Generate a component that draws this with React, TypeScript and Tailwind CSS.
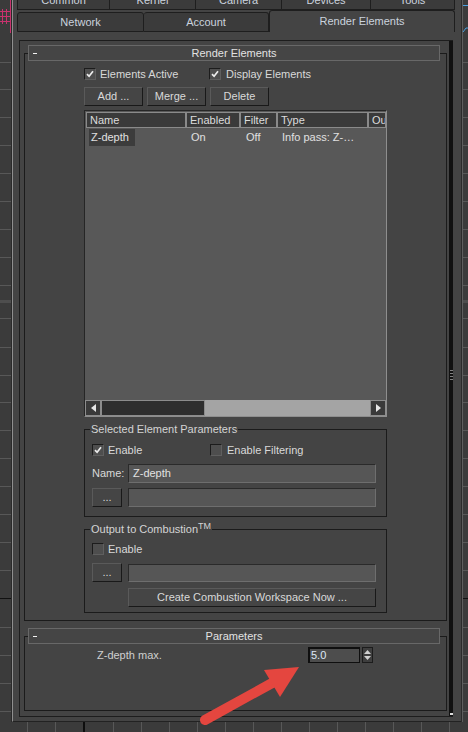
import React from 'react'

type Kids = { children?: React.ReactNode; className?: string }

// grid lines of the viewport showing around the dialog
const hLines = [62, 89, 117, 145, 173, 201, 229, 257, 285, 318, 347, 375, 402, 430, 458, 486, 514, 542, 570, 627, 655, 683, 711]
const vLines = [27, 55, 113, 141, 169, 197, 225, 253, 281, 309, 337, 365, 393, 421, 449]

const LeftViewport = () => (
  <svg width="12" height="722" className="block shrink-0">
    <rect width="12" height="722" fill="#3b3b3b" />
    {hLines.map((y) => (
      <rect key={y} x="0" y={y} width="11" height="1" fill="#585858" />
    ))}
    <rect x="0" y="300" width="11" height="3" fill="#4e4e4e" />
    <rect x="0" y="598" width="11" height="1" fill="#111" />
    {/* magenta helper grid in the corner */}
    <rect x="10" y="0" width="1" height="33" fill="#c8326e" />
    <rect x="0" y="11" width="10" height="1" fill="#c8326e" />
    <rect x="0" y="16" width="10" height="1" fill="#c8326e" />
    <rect x="0" y="21" width="10" height="1" fill="#c8326e" />
    <rect x="2" y="9" width="1" height="15" fill="#c8326e" />
    <rect x="6" y="9" width="1" height="15" fill="#c8326e" />
    <rect x="11" y="0" width="1" height="722" fill="#2a2a2a" />
  </svg>
)

const RightViewport = () => (
  <svg width="7" height="722" className="block shrink-0">
    <rect width="7" height="722" fill="#3b3b3b" />
    <rect x="0" y="0" width="1" height="722" fill="#2b2b2b" />
    <rect x="1" y="0" width="1" height="722" fill="#5e5e5e" />
    {hLines.map((y) => (
      <rect key={y} x="2" y={y} width="5" height="1" fill="#585858" />
    ))}
    <rect x="2" y="300" width="5" height="3" fill="#4e4e4e" />
    <rect x="2" y="598" width="5" height="1" fill="#111" />
    <rect x="2" y="5" width="5" height="1" fill="#4b9fe0" />
    <path d="M2 32 L5 28 L7 28" fill="none" stroke="#4b9fe0" strokeWidth="1" />
  </svg>
)

const BottomViewport = () => (
  <svg width="468" height="10" className="block shrink-0">
    <rect width="468" height="10" fill="#3b3b3b" />
    {vLines.map((x) => (
      <rect key={x} x={x} y="0" width="1" height="10" fill="#585858" />
    ))}
    <rect x="83" y="0" width="2" height="10" fill="#0e0e0e" />
  </svg>
)

const CheckBox = ({ checked = false }: { checked?: boolean }) => (
  <span className="flex h-[12px] w-[12px] shrink-0 items-center justify-center border border-t-[#1c1c1c] border-l-[#1c1c1c] border-b-[#5f5f5f] border-r-[#5f5f5f] bg-[#4e4e4e]">
    {checked && (
      <svg width="8" height="8" viewBox="0 0 8 8">
        <path d="M1 4.1 L3.1 6.3 L7 1.3" fill="none" stroke="#ededed" strokeWidth="1.7" />
      </svg>
    )}
  </span>
)

const Button = ({ children, className = '' }: Kids) => (
  <div
    className={`flex shrink-0 items-center justify-center border border-t-[#5a5a5a] border-l-[#5a5a5a] border-b-[#191919] border-r-[#191919] bg-[#454545] text-[#d9d9d9] ${className}`}
  >
    {children}
  </div>
)

const Field = ({ children, className = '' }: Kids) => (
  <div
    className={`flex shrink-0 items-center border border-t-[#2a2a2a] border-l-[#2a2a2a] border-b-[#6e6e6e] border-r-[#6e6e6e] bg-[#565656] px-[4px] ${className}`}
  >
    {children}
  </div>
)

const Rollout = ({ title, children, className = '' }: Kids & { title: string }) => (
  <div className={`relative w-[423px] ${className}`}>
    {/* body frame, the header sits on top of its upper edge */}
    <div className="pointer-events-none absolute inset-x-0 top-[8px] bottom-0 border border-[#1b1b1b]" />
    <div className="relative ml-[4px] mr-[7px] flex h-[16px] items-center justify-center border border-[#686868] bg-[#454545] text-[#e2e2e2]">
      <span className="absolute left-[4px] top-[7px] h-[1px] w-[4px] bg-[#f2f2f2]" />
      {title}
    </div>
    <div className="relative">{children}</div>
  </div>
)

const Group = ({ title, children, className = '' }: Kids & { title: React.ReactNode }) => (
  <fieldset className={`border border-[#1b1b1b] ${className}`}>
    <legend className="ml-[5px] px-[1px] leading-[13px] text-[#d4d4d4]">{title}</legend>
    {children}
  </fieldset>
)

const HeadCell = ({ children, className = '' }: Kids) => (
  <div className={`flex h-[16px] shrink-0 items-center overflow-hidden border border-[#8a8a8a] bg-[#3a3a3a] pl-[3px] ${className}`}>
    {children}
  </div>
)

const Arrow = ({ dir }: { dir: 'left' | 'right' }) => (
  <div className="flex h-[16px] w-[16px] shrink-0 items-center justify-center border border-[#8d8d8d] bg-[#3a3a3a]">
    <svg width="5" height="8" viewBox="0 0 5 8">
      {dir === 'left' ? <path d="M5 0 L0 4 L5 8 Z" fill="#e6e6e6" /> : <path d="M0 0 L5 4 L0 8 Z" fill="#e6e6e6" />}
    </svg>
  </div>
)

const ElementList = () => (
  <div className="mt-[4px] flex h-[307px] w-[303px] flex-col border border-t-[#262626] border-l-[#262626] border-b-[#8e8e8e] border-r-[#8e8e8e] bg-[#585858]">
    <div className="flex pl-[1px] pt-[1px] text-[#dcdcdc]">
      <HeadCell className="w-[100px]">Name</HeadCell>
      <HeadCell className="w-[54px]">Enabled</HeadCell>
      <HeadCell className="w-[37px]">Filter</HeadCell>
      <HeadCell className="w-[91px]">Type</HeadCell>
      <HeadCell className="min-w-0 flex-1">Output</HeadCell>
    </div>
    <div className="mt-[1px] flex h-[17px] items-center pl-[1px] text-[#e0e0e0]">
      <div className="flex w-[100px] pl-[3px]">
        <span className="flex h-[17px] w-[46px] items-center bg-[#3c3c3c] pl-[2px]">Z-depth</span>
      </div>
      <span className="w-[54px] pl-[5px]">On</span>
      <span className="w-[37px] pl-[6px]">Off</span>
      <span className="w-[91px] pl-[5px]">Info pass: Z-…</span>
    </div>
    <div className="flex-1" />
    <div className="flex h-[16px]">
      <Arrow dir="left" />
      <div className="h-[16px] w-[104px] shrink-0 border border-[#8c8c8c] bg-[#2e2e2e]" />
      <div className="flex-1 bg-[#a4a4a4]" />
      <Arrow dir="right" />
    </div>
  </div>
)

const Tab = ({ children, className = '' }: Kids) => (
  <div className={`flex shrink-0 items-center justify-center text-[#cbd3de] ${className}`}>{children}</div>
)

const Tabs = () => (
  <div className="shrink-0">
    <div className="h-[10px] overflow-hidden pl-[4px]">
      <div className="-mt-[10px] flex h-[20px]">
        <Tab className="w-[93px] border border-[#1e1e1e] bg-[#3b3b3b]">Common</Tab>
        <Tab className="w-[86px] border border-l-0 border-[#1e1e1e] bg-[#3b3b3b]">Kernel</Tab>
        <Tab className="w-[86px] border border-l-0 border-[#1e1e1e] bg-[#3b3b3b]">Camera</Tab>
        <Tab className="w-[89px] border border-l-0 border-[#1e1e1e] bg-[#3b3b3b]">Devices</Tab>
        <Tab className="w-[84px] border border-l-0 border-[#1e1e1e] bg-[#3b3b3b]">Tools</Tab>
      </div>
    </div>
    <div className="flex h-[22px] items-end pl-[4px]">
      <Tab className="h-[20px] w-[127px] rounded-t-[3px] border border-[#1e1e1e] bg-[#3b3b3b]">Network</Tab>
      <Tab className="h-[20px] w-[125px] rounded-t-[3px] border border-l-0 border-[#1e1e1e] bg-[#3b3b3b]">Account</Tab>
      <Tab className="h-[22px] w-[186px] rounded-t-[3px] border border-b-0 border-[#1e1e1e] bg-[#444444]">Render Elements</Tab>
    </div>
  </div>
)

export default function App() {
  return (
    <div className="relative flex h-[732px] w-[468px] flex-col overflow-hidden bg-[#3b3b3b] font-['Liberation_Sans',Arial,sans-serif] text-[11px] leading-[13px] text-[#d9d9d9]">
      <div className="flex h-[722px]">
        <LeftViewport />
        <div className="flex w-[449px] shrink-0 flex-col border-b border-l border-b-[#222222] border-l-[#8f8f8f] bg-[#444444]">
          <Tabs />
          <div className="flex min-h-0 flex-1 flex-col pb-[4px] pl-[6px] pr-[8px] pt-[8px]">
            <div className="flex min-h-0 flex-1 border-b border-l border-t border-[#1d1d1d]">
              <div className="flex-1 pl-[4px] pt-[4px]">
                <Rollout title="Render Elements" className="h-[576px]">
                  <div className="ml-[60px] w-[303px] pt-[7px]">
                    <div className="flex h-[12px] items-center">
                      <CheckBox checked />
                      <span className="ml-[4px] w-[109px]">Elements Active</span>
                      <CheckBox checked />
                      <span className="ml-[5px]">Display Elements</span>
                    </div>
                    <div className="mt-[7px] flex h-[19px] gap-[4px]">
                      <Button className="h-[19px] w-[59px]">Add ...</Button>
                      <Button className="h-[19px] w-[59px]">Merge ...</Button>
                      <Button className="h-[19px] w-[59px]">Delete</Button>
                    </div>
                    <ElementList />
                    <Group title="Selected Element Parameters" className="mt-[6px] h-[94px]">
                      <div className="pl-[7px]">
                        <div className="mt-[8px] flex h-[12px] items-center">
                          <CheckBox checked />
                          <span className="ml-[4px] w-[102px]">Enable</span>
                          <CheckBox />
                          <span className="ml-[5px]">Enable Filtering</span>
                        </div>
                        <div className="mt-[8px] flex h-[19px] items-center">
                          <span className="w-[36px]">Name:</span>
                          <Field className="h-[19px] w-[248px] text-[#e2e2e2]">Z-depth</Field>
                        </div>
                        <div className="mt-[5px] flex h-[19px] items-center">
                          <Button className="h-[19px] w-[30px] text-[#bcbcbc]">...</Button>
                          <Field className="ml-[6px] h-[19px] w-[248px]" />
                        </div>
                      </div>
                    </Group>
                    <Group
                      title={
                        <>
                          Output to Combustion<sup className="text-[9px]">TM</sup>
                        </>
                      }
                      className="mt-[6px] h-[90px]"
                    >
                      <div className="pl-[7px]">
                        <div className="mt-[7px] flex h-[12px] items-center">
                          <CheckBox />
                          <span className="ml-[4px]">Enable</span>
                        </div>
                        <div className="mt-[8px] flex h-[19px] items-center">
                          <Button className="h-[19px] w-[30px] text-[#bcbcbc]">...</Button>
                          <Field className="ml-[6px] h-[18px] w-[248px]" />
                        </div>
                        <Button className="ml-[36px] mt-[6px] h-[19px] w-[248px]">Create Combustion Workspace Now ...</Button>
                      </div>
                    </Group>
                  </div>
                </Rollout>
                <Rollout title="Parameters" className="mt-[7px] h-[83px]">
                  <div className="mt-[3px] flex h-[16px] items-center">
                    <span className="ml-[73px] w-[211px] text-[#cfcfcf]">Z-depth max.</span>
                    <div className="flex h-[16px] w-[52px] items-center border-2 border-b border-r border-[#0f0f0f] bg-[#4d4d4d] pl-[1px] text-[#dfe8f6]">
                      5.0
                    </div>
                    <div className="ml-[2px] flex h-[16px] w-[11px] flex-col items-center justify-center gap-[2px] border border-[#1c1c1c] bg-[#3e3e3e]">
                      <svg width="7" height="4" viewBox="0 0 7 4">
                        <path d="M0 4 L3.5 0 L7 4 Z" fill="#d0d0d0" />
                      </svg>
                      <svg width="7" height="4" viewBox="0 0 7 4">
                        <path d="M0 0 L3.5 4 L7 0 Z" fill="#d0d0d0" />
                      </svg>
                    </div>
                  </div>
                </Rollout>
              </div>
              {/* panel scroll strip with its grip */}
              <div className="flex w-[4px] shrink-0 flex-col items-center bg-[#111111] pt-[329px]">
                <div className="flex flex-col gap-[2px]">
                  <span className="h-[1px] w-[3px] bg-[#808080]" />
                  <span className="h-[1px] w-[3px] bg-[#808080]" />
                  <span className="h-[1px] w-[3px] bg-[#808080]" />
                  <span className="h-[1px] w-[3px] bg-[#808080]" />
                </div>
                <span className="mb-[1px] mt-auto h-[2px] w-[3px] bg-[#dddddd]" />
              </div>
            </div>
          </div>
        </div>
        <RightViewport />
      </div>
      <BottomViewport />
      <svg className="pointer-events-none absolute left-0 top-0" width="468" height="732">
        <line x1="205" y1="720" x2="274" y2="682" stroke="#e4463f" strokeWidth="10" strokeLinecap="round" />
        <polygon points="299,667 264,670 280,697" fill="#e4463f" />
      </svg>
    </div>
  )
}
